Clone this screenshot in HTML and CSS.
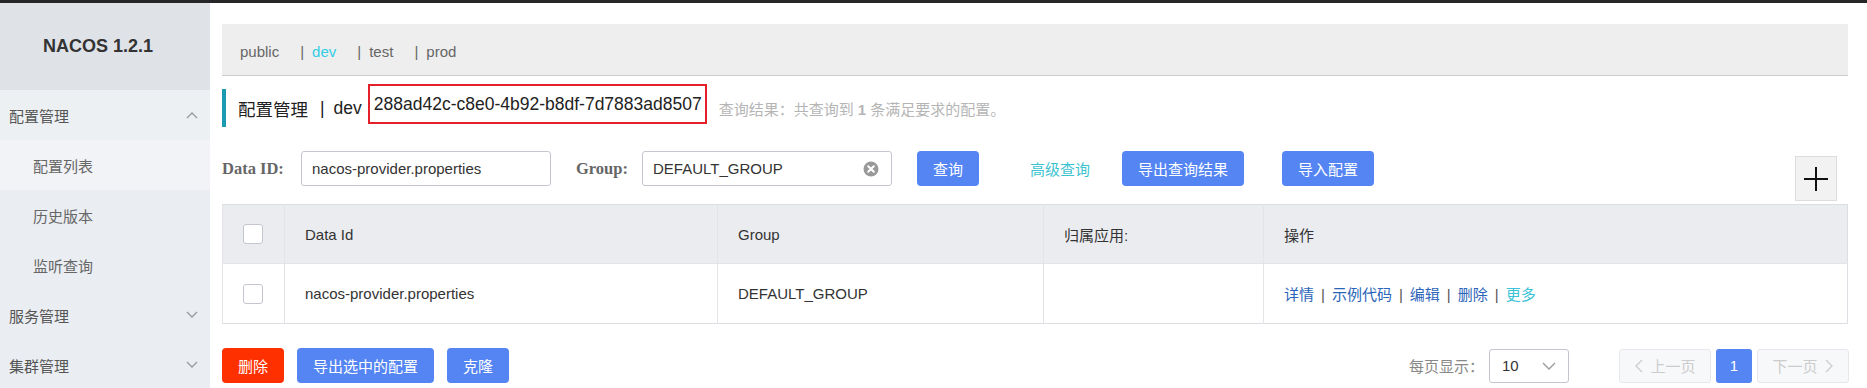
FILE: index.html
```html
<!DOCTYPE html>
<html lang="zh-CN">
<head>
    <meta charset="UTF-8">
    <meta name="viewport" content="width=device-width, initial-scale=1.0">
    <title>NACOS 1.2.1 - 配置管理</title>
    <link rel="stylesheet" href="styles.css">
</head>
<body>
    <div class="topbar"></div>
    <div class="layout">
        <!-- 左侧菜单 -->
        <aside class="sidebar">
            <div class="brand">NACOS 1.2.1</div>
            <div class="menu-item menu-open">
                <span>配置管理</span>
                <svg class="arrow" width="12" height="8" viewBox="0 0 12 8"><polyline points="1,7 6,2 11,7" /></svg>
            </div>
            <div class="menu-item sub active">配置列表</div>
            <div class="menu-item sub">历史版本</div>
            <div class="menu-item sub">监听查询</div>
            <div class="menu-item">
                <span>服务管理</span>
                <svg class="arrow" width="12" height="8" viewBox="0 0 12 8"><polyline points="1,1 6,6 11,1" /></svg>
            </div>
            <div class="menu-item">
                <span>集群管理</span>
                <svg class="arrow" width="12" height="8" viewBox="0 0 12 8"><polyline points="1,1 6,6 11,1" /></svg>
            </div>
        </aside>

        <main class="main">
            <!-- 命名空间 -->
            <div class="ns-bar">
                <span class="ns-item">public</span>
                <span class="ns-item"><span class="ns-sep">|</span><span class="ns-current">dev</span></span>
                <span class="ns-item"><span class="ns-sep">|</span>test</span>
                <span class="ns-item"><span class="ns-sep">|</span>prod</span>
            </div>

            <div class="page-title">
                <span>配置管理</span>
                <span class="title-sep">|</span>
                <span>dev</span>
                <span class="ns-id">288ad42c-c8e0-4b92-b8df-7d7883ad8507</span>
                <span class="query-result">查询结果：共查询到 <b>1</b> 条满足要求的配置。</span>
            </div>

            <!-- 搜索条件 -->
            <div class="search-row">
                <label class="form-label label-dataid">Data ID:</label>
                <div class="input-wrap input-dataid">
                    <input type="text" value="nacos-provider.properties">
                </div>
                <label class="form-label label-group">Group:</label>
                <div class="input-wrap input-group">
                    <input type="text" value="DEFAULT_GROUP">
                    <svg class="clear-icon" width="16" height="16" viewBox="0 0 16 16">
                        <circle cx="8" cy="8" r="7.5" fill="#999" />
                        <path d="M5.2 5.2 L10.8 10.8 M10.8 5.2 L5.2 10.8" stroke="#fff" stroke-width="2" stroke-linecap="round" />
                    </svg>
                </div>
                <button class="btn btn-primary btn-query">查询</button>
                <a class="link-advanced">高级查询</a>
                <button class="btn btn-primary btn-export">导出查询结果</button>
                <button class="btn btn-primary">导入配置</button>
                <button class="btn-add">
                    <svg width="26" height="26" viewBox="0 0 26 26"><path d="M13 1 V25 M1 13 H25" stroke="#111" stroke-width="2" /></svg>
                </button>
            </div>

            <!-- 配置列表 -->
            <table class="config-table">
                <thead>
                    <tr>
                        <th class="col-check"><span class="checkbox"></span></th>
                        <th class="col-dataid">Data Id</th>
                        <th class="col-group">Group</th>
                        <th class="col-app">归属应用:</th>
                        <th>操作</th>
                    </tr>
                </thead>
                <tbody>
                    <tr>
                        <td class="col-check"><span class="checkbox"></span></td>
                        <td>nacos-provider.properties</td>
                        <td>DEFAULT_GROUP</td>
                        <td></td>
                        <td class="actions">
                            <a>详情</a><span class="sep">|</span><a>示例代码</a><span class="sep">|</span><a>编辑</a><span class="sep">|</span><a>删除</a><span class="sep">|</span><a class="more">更多</a>
                        </td>
                    </tr>
                </tbody>
            </table>

            <div class="footer-row">
                <div class="batch-actions">
                    <button class="btn btn-danger">删除</button>
                    <button class="btn btn-primary">导出选中的配置</button>
                    <button class="btn btn-primary">克隆</button>
                </div>
                <div class="pagination">
                    <span class="page-size-label">每页显示：</span>
                    <div class="page-size">
                        <span>10</span>
                        <svg width="14" height="8" viewBox="0 0 14 8"><polyline points="1,1 7,7 13,1" /></svg>
                    </div>
                    <div class="pager">
                        <span class="page-btn disabled">
                            <svg width="9" height="14" viewBox="0 0 9 14"><polyline points="8,1 2,7 8,13" /></svg>上一页
                        </span>
                        <span class="page-btn current">1</span>
                        <span class="page-btn disabled">下一页
                            <svg width="9" height="14" viewBox="0 0 9 14"><polyline points="1,1 7,7 1,13" /></svg>
                        </span>
                    </div>
                </div>
            </div>
        </main>
    </div>
</body>
</html>
```

FILE: styles.css
```css
body {
    margin: 0;
    font-family: 'Liberation Sans', 'Noto Sans CJK SC', sans-serif;
    font-size: 15px;
    color: #333;
    background: #fff;
    overflow: hidden;
}

.topbar {
    height: 3px;
    background: #262626;
}

.layout {
    display: flex;
    height: 385px;
}

/* 左侧菜单 */
.sidebar {
    width: 210px;
    flex-shrink: 0;
    background: #eaedf1;
}

.brand {
    height: 87px;
    display: flex;
    align-items: center;
    justify-content: center;
    padding-right: 14px;
    background: #dfe2e7;
    font-size: 18px;
    font-weight: bold;
    color: #333;
}

.menu-item {
    height: 50px;
    display: flex;
    align-items: center;
    justify-content: space-between;
    padding: 0 12px 0 9px;
    color: #555;
}

.menu-item.menu-open {
    background: #edf0f3;
}

.menu-item.sub {
    padding-left: 33px;
    color: #666;
}

.menu-item.active {
    background: #f1f3f6;
}

.arrow polyline {
    fill: none;
    stroke: #999;
    stroke-width: 1.3;
}

/* 主区域 */
.main {
    flex: 1;
    min-width: 0;
    padding: 21px 19px 0 12px;
}

.ns-bar {
    height: 48px;
    display: flex;
    align-items: center;
    padding: 3px 0 0 18px;
    background: #eee;
    border-bottom: 1px solid #ccc;
    color: #666;
}

.ns-item {
    margin-right: 21px;
}

.ns-sep {
    margin-right: 8px;
}

.ns-current {
    color: #33cde5;
}

.page-title {
    margin-top: 13px;
    height: 38px;
    display: flex;
    align-items: center;
    border-left: 4px solid #1c9bb2;
    padding-left: 12px;
    font-size: 17.5px;
    color: #222;
}

.title-sep {
    margin: 0 9px 0 12px;
}

.ns-id {
    margin: 0 0 8px 6px;
    padding: 0 3px 0 4px;
    line-height: 36px;
    border: 2px solid #e3202b;
}

.query-result {
    margin-left: 12px;
    font-size: 15px;
    color: #b5b5b5;
}

/* 搜索条件 */
.search-row {
    margin-top: 24px;
    height: 35px;
    display: flex;
    align-items: center;
}

.form-label {
    font-family: 'Liberation Serif', serif;
    font-weight: bold;
    font-size: 16.5px;
    color: #666;
}

.label-dataid {
    width: 63px;
    margin-right: 16px;
}

.label-group {
    width: 51px;
    margin: 0 15px 0 25px;
}

.input-wrap {
    height: 33px;
    display: flex;
    align-items: center;
    border: 1px solid #c4c6cf;
    border-radius: 3px;
    background: #fff;
}

.input-wrap input {
    flex: 1;
    min-width: 0;
    border: none;
    outline: none;
    padding: 0 10px;
    font-family: inherit;
    font-size: 15px;
    color: #333;
    background: transparent;
}

.input-dataid {
    width: 248px;
}

.input-group {
    width: 248px;
}

.clear-icon {
    margin-right: 12px;
}

.btn {
    height: 35px;
    padding: 0 16px;
    border: none;
    border-radius: 4px;
    font-family: inherit;
    font-size: 15px;
    color: #fff;
    cursor: pointer;
}

.btn-primary {
    background: #5485f3;
}

.btn-danger {
    background: #ff3000;
}

.btn-query {
    margin-left: 25px;
}

.link-advanced {
    margin: 0 32px 0 51px;
    color: #3cc3cf;
    cursor: pointer;
}

.btn-export {
    margin-right: 38px;
}

.btn-add {
    align-self: flex-start;
    margin: 5px 11px 0 auto;
    width: 42px;
    height: 45px;
    padding: 0;
    display: flex;
    align-items: center;
    justify-content: center;
    background: #f2f2f2;
    border: 1px solid #ddd;
}

/* 表格 */
.config-table {
    margin-top: 18px;
    width: 100%;
    table-layout: fixed;
    border-collapse: collapse;
    border: 1px solid #dcdee3;
}

.config-table th,
.config-table td {
    padding: 0 20px;
    text-align: left;
    font-weight: normal;
    border-left: 1px solid #e3e4e8;
}

.config-table th {
    height: 58px;
    background: #ebecf0;
    color: #333;
}

.config-table td {
    height: 59px;
    border-top: 1px solid #e3e4e8;
}

.config-table .col-check {
    width: 21px;
    padding: 0 20px;
}

.col-dataid { width: 392px; }
.col-group { width: 285px; }
.col-app { width: 179px; }

.checkbox {
    display: block;
    width: 18px;
    height: 18px;
    border: 1px solid #c4c6cf;
    border-radius: 3px;
    background: #fff;
}

.actions a {
    color: #2c64b9;
    cursor: pointer;
}

.actions a.more {
    color: #3cc3d8;
}

.actions .sep {
    margin: 0 7px;
    color: #555;
}

/* 底部 */
.footer-row {
    margin-top: 24px;
    display: flex;
    align-items: center;
    justify-content: space-between;
}

.batch-actions {
    display: flex;
    gap: 13px;
}

.pagination {
    display: flex;
    align-items: center;
    margin-right: -1px;
}

.page-size-label {
    color: #888;
}

.page-size {
    width: 80px;
    height: 34px;
    box-sizing: border-box;
    margin: 0 50px 0 5px;
    padding: 0 12px;
    display: flex;
    align-items: center;
    justify-content: space-between;
    border: 1px solid #c4c6cf;
    border-radius: 3px;
    color: #333;
}

.page-size polyline,
.page-btn polyline {
    fill: none;
    stroke: #999;
    stroke-width: 1.3;
}

.pager {
    display: flex;
    gap: 5px;
}

.page-btn {
    height: 34px;
    box-sizing: border-box;
    display: flex;
    align-items: center;
    justify-content: center;
    gap: 7px;
    border-radius: 3px;
}

.page-btn.disabled {
    width: 92px;
    background: #f7f8fa;
    border: 1px solid #e6e7eb;
    color: #ccc;
}

.page-btn.disabled polyline {
    stroke: #ccc;
}

.page-btn.current {
    width: 36px;
    background: #5485f3;
    color: #fff;
}
```
